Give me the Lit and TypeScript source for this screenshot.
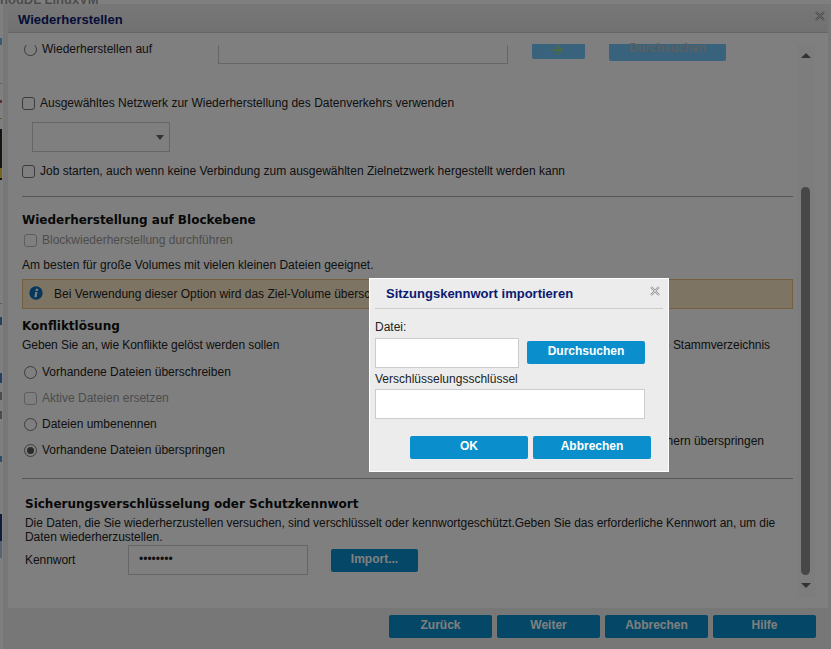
import { LitElement, html, css } from "lit";
import { customElement } from "lit/decorators.js";

const ARROW = html`<svg width="14" height="12" viewBox="0 0 14 12"><path d="M1 6h10M7 1.5 11.5 6 7 10.5" fill="none" stroke="#94d884" stroke-width="1.9"/></svg>`;
const CLOSE = html`<svg width="10" height="10" viewBox="0 0 10 10"><path d="M1 1l8 8M9 1l-8 8" fill="none" stroke="#999" stroke-width="2.2"/><path d="M1 1l8 8M9 1l-8 8" fill="none" stroke="#eee" stroke-width=".7"/></svg>`;

const MARKS = [
  { top: 38, h: 7, c: "#6fb6e0" },
  { top: 83, h: 1, c: "#bbb" },
  { top: 100, h: 3, c: "#c06060" },
  { top: 118, h: 1, c: "#e0a050" },
  { top: 129, h: 51, c: "#2a2a20" },
  { top: 168, h: 10, c: "#e8c838" },
  { top: 303, h: 1, c: "#bbb" },
  { top: 317, h: 8, c: "#5080c0" },
  { top: 373, h: 10, c: "#4a80c8" },
  { top: 392, h: 8, c: "#999" },
  { top: 411, h: 8, c: "#999" },
  { top: 456, h: 6, c: "#5a9ad0" },
  { top: 514, h: 27, c: "#1a3a78" },
  { top: 541, h: 17, c: "#b0c4e0" },
];

@customElement("app-root")
export class AppRoot extends LitElement {
  static styles = css`
    :host { display: block; position: relative; width: 831px; height: 649px; overflow: hidden;
      font-family: "Liberation Sans", Arial, sans-serif; font-size: 12px; color: #222; background: #fff; }
    .page { display: flex; height: 649px; }
    .strip { width: 3px; flex: none; position: relative; background: #fff; }
    .strip i { position: absolute; left: 0; width: 2px; }
    .peek { position: absolute; left: 0; top: -8px; font-size: 13px; font-weight: bold; color: #999; white-space: nowrap; }
    .win { flex: 1; margin-top: 4px; display: flex; flex-direction: column; background: #eee; min-width: 0; position: relative; }
    .tophead { height: 19px; padding: 9px 3px 0 10px; flex: none; margin: 0 3px 0 5px; background: linear-gradient(#efefef, #e2e2e2);
      border-bottom: 1px solid #ccc; font-size: 13px; font-weight: bold; color: #0a1a70; line-height: 14px; display: flex; justify-content: space-between; }
    .tophead svg { margin-top: -2px; }
    .panel { margin-left: 5px; width: 820px; height: 575px; flex: none; background: #fff; display: flex; }
    .body { width: 789px; flex: none; padding: 12px 0 0 14px; box-sizing: border-box; display: flex; flex-direction: column; }
    .rail { width: 18px; height: 554px; margin-top: 11px; flex: none; display: flex; flex-direction: column; align-items: flex-start; padding-left: 4px; box-sizing: border-box; background: #fbfbfb; }
    .up, .down { width: 0; height: 0; border-left: 5px solid transparent; border-right: 5px solid transparent; }
    .up { border-bottom: 5px solid #666; margin-top: 9px; }
    .thumb { width: 9px; height: 388px; margin-top: 129px; background: #8e8e8e; border-radius: 5px; }
    .down { border-top: 5px solid #666; margin-top: 8px; }
    .row { display: flex; align-items: center; }
    .r1 { height: 20px; align-items: flex-start; }
    .radio { width: 13px; height: 13px; border: 1px solid #777; border-radius: 50%; box-sizing: border-box; flex: none; margin: 0 5px 0 2px; background: #fff; position: relative; }
    .radio.cut { margin-top: -2px; border-top-color: transparent; }
    .radio.on::after { content: ""; position: absolute; inset: 2px; background: #555; border-radius: 50%; }
    .check { width: 13px; height: 13px; border: 1px solid #777; border-radius: 3px; box-sizing: border-box; flex: none; margin-right: 5px; background: #fff; }
    .check.dis { border-color: #bbb; margin: 0 5px 0 2px; }
    .dis-t { color: #999; }
    .lbl1 { width: 176px; flex: none; margin-top: -3px; }
    .inp1 { width: 290px; height: 19px; flex: none; border: 1px solid #ccc; border-top: 0; box-sizing: border-box; background: #fff; }
    .b1 { width: 53px; height: 15px; flex: none; margin-left: 24px; margin-top: -1px; background: #72c6f8; border-radius: 0 0 2px 2px; display: flex; justify-content: center; padding-right: 4px; box-sizing: border-box; }
    .b2 { width: 117px; height: 17px; flex: none; margin-left: 24px; margin-top: -1px; background: #72c6f8; border-radius: 0 0 2px 2px; color: #b4c0c8; font-weight: bold; text-align: center; line-height: 8px; }
    .net { margin-top: 30px; height: 16px; }
    .select { width: 138px; height: 30px; margin: 11px 0 0 10px; border: 1px solid #ccc; box-sizing: border-box; background: #fff; display: flex; align-items: center; justify-content: flex-end; padding-right: 5px; }
    .caret { width: 0; height: 0; border-left: 4px solid transparent; border-right: 4px solid transparent; border-top: 5px solid #666; }
    .job { margin-top: 11px; height: 16px; }
    hr { border: 0; border-top: 1px solid #aaa; margin: 0; width: 771px; }
    .hr1 { margin-top: 17px; }
    .h { font: bold 12px "DejaVu Sans", sans-serif; color: #111; line-height: 16px; }
    .h1 { margin-top: 15px; }
    .block { margin-top: 4px; height: 16px; }
    .best { margin-top: 10px; height: 16px; }
    .note { width: 771px; height: 30px; margin-top: 5px; box-sizing: border-box; background: #fbe9c8; border: 1px solid #e8c078; display: flex; align-items: center; padding-left: 6px; white-space: nowrap; }
    .note svg { margin: -2px 11px 0 0; flex: none; }
    .conf { margin-top: 9px; }
    .grid { display: flex; justify-content: space-between; margin-top: 4px; letter-spacing: -.06px; }
    .right { margin-right: 27px; white-space: nowrap; }
    .optwrap { display: flex; justify-content: space-between; align-items: flex-start; }
    .right2 { margin: 82px 33px 0 0; white-space: nowrap; }
    .opts { display: flex; flex-direction: column; }
    .opt { height: 16px; margin-top: 10px; display: flex; align-items: center; }
    .opt.first { margin-top: 12px; }
    .foot-hr { margin-top: 20px; }
    .sec { padding-left: 3px; letter-spacing: -.05px; width: 768px; }
    .sec .h { margin-top: 17px; letter-spacing: 0; }
    .desc { margin-top: 4px; }
    .kw { display: flex; align-items: center; margin-top: 1px; }
    .kw .l { width: 103px; }
    .pw { width: 180px; height: 30px; border: 1px solid #ccc; box-sizing: border-box; background: #fff; padding-left: 10px; line-height: 26px; letter-spacing: 0; }
    .imp { width: 87px; height: 23px; margin-left: 23px; background: #0a8fcc; border-radius: 2px; color: #fff; font-weight: bold; text-align: center; line-height: 20px; letter-spacing: 0; }
    .footer { flex: 1; display: flex; justify-content: flex-end; padding: 7px 15px 0 0; gap: 5px; }
    .btn { width: 103px; height: 23px; background: #0a8fcc; border-radius: 2px; color: #fff; font-weight: bold; text-align: center; line-height: 20px; }
    .veil { position: absolute; inset: 0; background: rgba(0,0,0,.5); }
    .dlg { position: absolute; left: 369px; top: 278px; width: 300px; height: 194px; box-sizing: border-box; background: #ececec; border: 1px solid #fff; padding: 0 5px; }
    .dh { height: 22px; padding: 7px 0 0 11px; border-bottom: 1px solid #ccc; font: bold 13px "Liberation Sans", sans-serif; color: #0a1a70; line-height: 15px; position: relative; }
    .dh svg { position: absolute; right: 3px; top: 7px; }
    .dl { line-height: 14px; }
    .dl.a { margin-top: 11px; }
    .dl.b { margin-top: 4px; }
    .in { border: 1px solid #ccc; box-sizing: border-box; background: #fff; height: 30px; display: block; }
    .in.file { width: 144px; }
    .in.key { width: 270px; margin-top: 3px; }
    .drow { display: flex; align-items: center; margin-top: 4px; }
    .dbtn { background: #0a8fcc; border-radius: 2px; color: #fff; font-weight: bold; text-align: center; width: 118px; height: 23px; line-height: 20px; }
    .browse { margin: -1px 0 0 8px; }
    .dacts { display: flex; justify-content: flex-end; gap: 5px; margin: 17px 12px 0 0; }
  `;

  render() {
    return html`
      <div class="page">
        <div class="strip">
          <span class="peek">nodDL LinuxVM</span>
          ${MARKS.map((m) => html`<i style="top:${m.top}px;height:${m.h}px;background:${m.c}"></i>`)}
        </div>
        <div class="win">
          <div class="tophead"><span>Wiederherstellen</span>${CLOSE}</div>
          <div class="panel">
            <div class="body">
              <div class="row r1">
                <span class="radio cut"></span><span class="lbl1">Wiederherstellen auf</span>
                <span class="inp1"></span>
                <span class="b1">${ARROW}</span>
                <span class="b2">Durchsuchen</span>
              </div>
              <div class="row net"><span class="check"></span>Ausgewähltes Netzwerk zur Wiederherstellung des Datenverkehrs verwenden</div>
              <div class="select"><span class="caret"></span></div>
              <div class="row job"><span class="check"></span>Job starten, auch wenn keine Verbindung zum ausgewählten Zielnetzwerk hergestellt werden kann</div>
              <hr class="hr1" />
              <div class="h h1">Wiederherstellung auf Blockebene</div>
              <div class="row block"><span class="check dis"></span><span class="dis-t">Blockwiederherstellung durchführen</span></div>
              <div class="best">Am besten für große Volumes mit vielen kleinen Dateien geeignet.</div>
              <div class="note">
                <svg width="14" height="14" viewBox="0 0 14 14"><circle cx="7" cy="7" r="6.7" fill="#0a70b8"/><path d="M6.2 6h2.3L7.6 11.2H5.3zM6.9 2.8h2.3L8.8 4.9H6.5z" fill="#fff"/></svg>
                <span>Bei Verwendung dieser Option wird das Ziel-Volume überschrieben.</span>
              </div>
              <div class="h conf">Konfliktlösung</div>
              <div class="grid"><span>Geben Sie an, wie Konflikte gelöst werden sollen</span><span class="right">den Stammverzeichnis</span></div>
              <div class="optwrap">
                <div class="opts">
                  <div class="opt first"><span class="radio"></span>Vorhandene Dateien überschreiben</div>
                  <div class="opt"><span class="check dis"></span><span class="dis-t">Aktive Dateien ersetzen</span></div>
                  <div class="opt"><span class="radio"></span>Dateien umbenennen</div>
                  <div class="opt"><span class="radio on"></span>Vorhandene Dateien überspringen</div>
                </div>
                <span class="right2">Datenspeichern überspringen</span>
              </div>
              <hr class="foot-hr" />
              <div class="sec">
                <div class="h">Sicherungsverschlüsselung oder Schutzkennwort</div>
                <div class="desc">Die Daten, die Sie wiederherzustellen versuchen, sind verschlüsselt oder kennwortgeschützt.Geben Sie das erforderliche Kennwort an, um die Daten wiederherzustellen.</div>
                <div class="kw"><span class="l">Kennwort</span><span class="pw">••••••••</span><span class="imp">Import...</span></div>
              </div>
            </div>
            <div class="rail"><span class="up"></span><span class="thumb"></span><span class="down"></span></div>
          </div>
          <div class="footer">
            <span class="btn">Zurück</span><span class="btn">Weiter</span><span class="btn">Abbrechen</span><span class="btn">Hilfe</span>
          </div>
        </div>
      </div>
      <div class="veil"></div>
      <div class="dlg">
        <div class="dh">Sitzungskennwort importieren${CLOSE}</div>
        <div class="dl a">Datei:</div>
        <div class="drow"><span class="in file"></span><span class="dbtn browse">Durchsuchen</span></div>
        <div class="dl b">Verschlüsselungsschlüssel</div>
        <div class="in key"></div>
        <div class="dacts"><span class="dbtn">OK</span><span class="dbtn">Abbrechen</span></div>
      </div>
    `;
  }
}
